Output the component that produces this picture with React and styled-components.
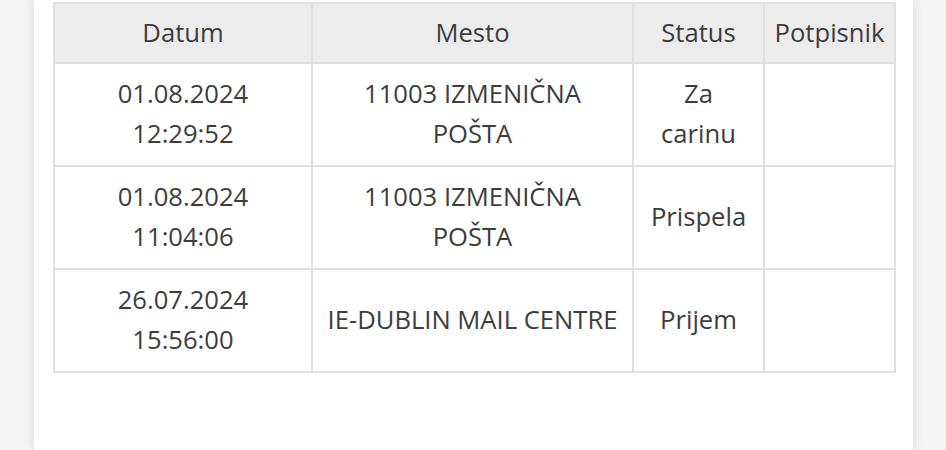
import styled, { createGlobalStyle } from "styled-components";

const GlobalStyle = createGlobalStyle`
  html, body {
    margin: 0;
    padding: 0;
    background: #f4f4f4;
  }
`;

const rows = [
  { date: "01.08.2024", time: "12:29:52", place: ["11003 IZMENIČNA", "POŠTA"], status: ["Za", "carinu"] },
  { date: "01.08.2024", time: "11:04:06", place: ["11003 IZMENIČNA", "POŠTA"], status: ["Prispela"] },
  { date: "26.07.2024", time: "15:56:00", place: ["IE-DUBLIN MAIL CENTRE"], status: ["Prijem"] },
];

function App() {
  return (
    <>
      <GlobalStyle />
      <Page>
        <Card>
          <Table>
            <colgroup>
              <col style={{ width: 258 }} />
              <col style={{ width: 321 }} />
              <col style={{ width: 131 }} />
              <col style={{ width: 131 }} />
            </colgroup>
            <thead>
              <tr>
                <Th>Datum</Th>
                <Th>Mesto</Th>
                <Th>Status</Th>
                <Th>Potpisnik</Th>
              </tr>
            </thead>
            <tbody>
              {rows.map((r, i) => (
                <tr key={i}>
                  <Td>
                    {r.date}
                    <br />
                    {r.time}
                  </Td>
                  <Td>
                    {r.place.map((p, j) => (
                      <Line key={j}>{p}</Line>
                    ))}
                  </Td>
                  <Td>
                    {r.status.map((s, j) => (
                      <Line key={j}>{s}</Line>
                    ))}
                  </Td>
                  <Td />
                </tr>
              ))}
            </tbody>
          </Table>
        </Card>
      </Page>
    </>
  );
}

export default App;

const Page = styled.div`
  height: 450px;
  padding: 0 33px 0 34px;
  overflow: hidden;
`;

const Card = styled.div`
  height: 100%;
  background: #fff;
  box-shadow: 0 0 10px rgba(0, 0, 0, 0.12);
  padding: 2px 19px 0;
  box-sizing: border-box;
`;

const Table = styled.table`
  width: 841px;
  border-collapse: collapse;
  table-layout: fixed;
  font-family: "Open Sans", "Noto Sans", sans-serif;
  font-size: 25.6px;
  line-height: 40px;
  color: #3d3d3d;
`;

const Th = styled.th`
  background: #ececec;
  font-weight: 400;
  border: 2px solid #e0e0e0;
  padding: 9px 2px;
  text-align: center;
  white-space: nowrap;
`;

const Td = styled.td`
  border: 2px solid #e0e0e0;
  padding: 10px 2px 11px;
  text-align: center;
  vertical-align: middle;
`;

const Line = styled.div``;
